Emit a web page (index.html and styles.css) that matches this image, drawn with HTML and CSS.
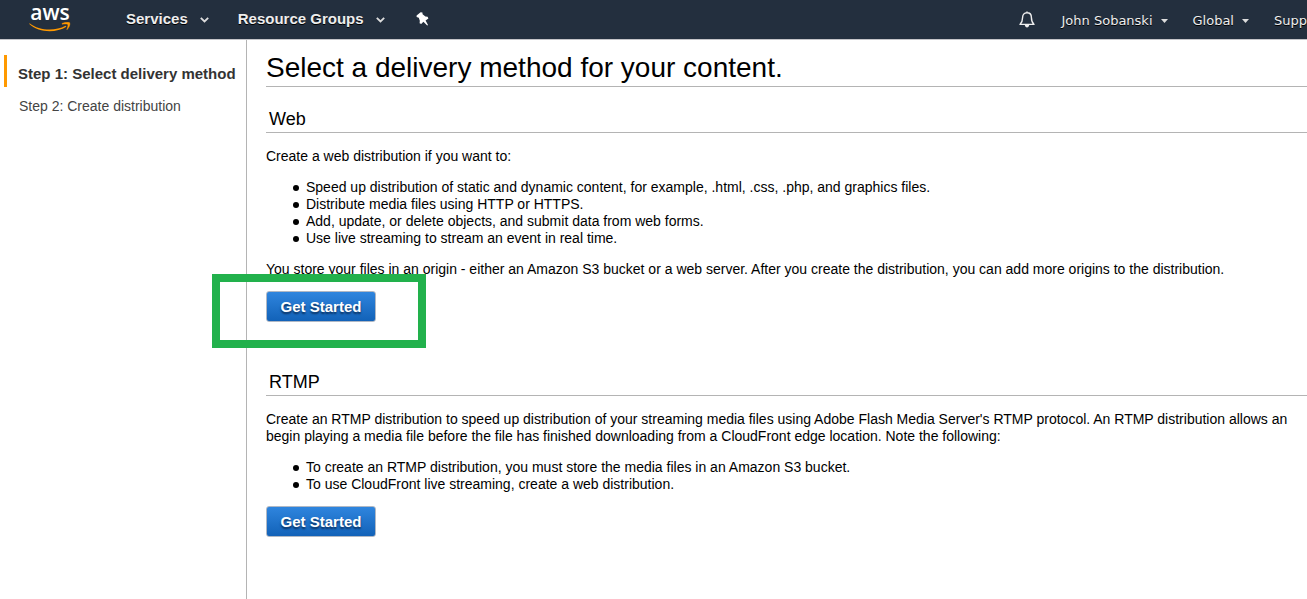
FILE: index.html
```html
<!DOCTYPE html>
<html lang="en">
<head>
<meta charset="utf-8">
<title>CloudFront - Select delivery method</title>
<link rel="stylesheet" href="styles.css">
</head>
<body>
<header class="topbar">
  <a class="logo" href="#" aria-label="AWS home">
    <span class="logo-text">aws</span>
    <svg class="logo-smile" width="42" height="12" viewBox="0 0 42 12" aria-hidden="true">
      <path d="M.6 1.2 C10 8.8 26 9.6 36.5 3.8 L37.4 4.8 C27 11.2 10 11 .3 2 Z" fill="#f90"/>
      <path d="M33 1.4 C36 .2 39 .1 40.8 .8 C41.4 3.2 39.5 6.5 37.8 7.8 C38.6 5.2 39.2 3.2 38.8 2.4 C38 1.8 35.5 2 33 2.2 Z" fill="#f90" stroke="#f90" stroke-width=".4"/>
    </svg>
  </a>
  <nav class="nav-main">
    <button class="nav-item" type="button">Services
      <svg class="chevron" width="9" height="6" viewBox="0 0 9 6" aria-hidden="true"><path d="M.8 .8 L4.5 4.4 L8.2 .8" fill="none" stroke="#ddd" stroke-width="1.8"/></svg>
    </button>
    <button class="nav-item" type="button">Resource Groups
      <svg class="chevron" width="9" height="6" viewBox="0 0 9 6" aria-hidden="true"><path d="M.8 .8 L4.5 4.4 L8.2 .8" fill="none" stroke="#ddd" stroke-width="1.8"/></svg>
    </button>
    <button class="nav-pin" type="button" aria-label="Pin shortcuts">
      <svg width="13" height="14" viewBox="0 0 13 14" aria-hidden="true"><path d="M4.6 .3 L6.4 .6 L6.6 2.2 L9.4 4.6 L11.6 4.8 L12.4 6.6 L9.6 8.6 L12 13 L11.2 13.6 L7.4 9.8 L5.2 12 L3.6 11.2 L3.8 8.8 L2.8 5.8 L.6 5 L.6 3.4 Z" fill="#fff"/></svg>
    </button>
  </nav>
  <nav class="nav-account">
    <button class="nav-bell" type="button" aria-label="Notifications">
      <svg width="16" height="17" viewBox="0 0 16 17" aria-hidden="true"><path d="M8 .6 V2 M8 1.8 C5 1.8 3.6 3.8 3.6 6.4 C3.6 10 2.7 11.7 1 13.4 H15 C13.3 11.7 12.4 10 12.4 6.4 C12.4 3.8 11 1.8 8 1.8 Z" fill="none" stroke="#eee" stroke-width="1.4" stroke-linejoin="round"/><path d="M5.8 14 H10.2 C10 17.2 6 17.2 5.8 14 Z" fill="#eee"/></svg>
    </button>
    <button class="account-item" type="button">John Sobanski
      <svg width="7" height="4" viewBox="0 0 7 4" aria-hidden="true"><path d="M0 0 H7 L3.5 4 Z" fill="#ddd"/></svg>
    </button>
    <button class="account-item" type="button">Global
      <svg width="7" height="4" viewBox="0 0 7 4" aria-hidden="true"><path d="M0 0 H7 L3.5 4 Z" fill="#ddd"/></svg>
    </button>
    <button class="account-item" type="button">Supp</button>
  </nav>
</header>
<div class="page">
  <aside class="steps">
    <a class="step step-current" href="#" aria-current="step">Step 1: Select delivery method</a>
    <a class="step" href="#">Step 2: Create distribution</a>
  </aside>
  <main class="content">
    <h1 class="title">Select a delivery method for your content.</h1>
    <section class="method">
      <h2 class="method-title">Web</h2>
      <p class="text">Create a web distribution if you want to:</p>
      <ul class="list">
        <li>Speed up distribution of static and dynamic content, for example, .html, .css, .php, and graphics files.</li>
        <li>Distribute media files using HTTP or HTTPS.</li>
        <li>Add, update, or delete objects, and submit data from web forms.</li>
        <li>Use live streaming to stream an event in real time.</li>
      </ul>
      <p class="text">You store your files in an origin - either an Amazon S3 bucket or a web server. After you create the distribution, you can add more origins to the distribution.</p>
      <div class="action"><button class="start" type="button">Get Started</button><span class="highlight"></span></div>
    </section>
    <section class="method">
      <h2 class="method-title">RTMP</h2>
      <p class="text">Create an RTMP distribution to speed up distribution of your streaming media files using Adobe Flash Media Server's RTMP protocol. An RTMP distribution allows an begin playing a media file before the file has finished downloading from a CloudFront edge location. Note the following:</p>
      <ul class="list">
        <li>To create an RTMP distribution, you must store the media files in an Amazon S3 bucket.</li>
        <li>To use CloudFront live streaming, create a web distribution.</li>
      </ul>
      <div class="action"><button class="start" type="button">Get Started</button></div>
    </section>
  </main>
</div>
</body>
</html>
```
FILE: styles.css
```css
* { box-sizing: border-box; }

body {
  margin: 0;
  min-height: 100vh;
  display: flex;
  flex-direction: column;
  background: #fff;
  color: #000;
  font: 14px/17px "Liberation Sans", Arial, sans-serif;
}

button {
  margin: 0;
  padding: 0;
  border: 0;
  background: none;
  cursor: pointer;
}

a { text-decoration: none; }
svg { display: block; flex: none; }

.topbar {
  display: flex;
  align-items: center;
  height: 40px;
  background: #232f3e;
  border-bottom: 1px solid #c4c4c8;
}

.logo {
  display: flex;
  flex-direction: column;
  align-items: center;
  flex: none;
  width: 42px;
  margin-left: 29px;
}

.logo-text {
  margin-top: -3px;
  color: #fff;
  font: 600 21px/20px "Open Sans", sans-serif;
}

.nav-main {
  display: flex;
  align-items: center;
  flex: none;
  gap: 29px;
  margin-left: 55px;
  padding-bottom: 2px;
}

.nav-item {
  display: flex;
  align-items: center;
  gap: 12px;
  color: #eee;
  font: bold 15px/18px "Liberation Sans", Arial, sans-serif;
  text-shadow: 0 1px 0 #000;
  white-space: nowrap;
}

.chevron { margin-top: 2px; }

.nav-pin { padding-left: 2px; }

.nav-account {
  display: flex;
  align-items: center;
  flex: none;
  gap: 25px;
  margin-left: auto;
}

.nav-bell { padding-right: 2px; }

.account-item {
  display: flex;
  align-items: center;
  gap: 8px;
  padding-top: 2px;
  color: #eee;
  font: 13px/18px "DejaVu Sans", Verdana, sans-serif;
  text-shadow: 0 1px 0 #000;
  white-space: nowrap;
}

.page {
  display: flex;
  flex: 1;
}

.steps {
  flex: 0 0 247px;
  padding: 15px 0 0 4px;
  border-right: 1px solid #b4b4b4;
}

.step {
  display: block;
  height: 32px;
  padding: 3px 0 0 12px;
  border-left: 3px solid transparent;
  color: #444;
  line-height: 32px;
  white-space: nowrap;
}

.step-current {
  padding-left: 11px;
  border-left-color: #ff9900;
  color: #333;
  font-size: 15px;
  font-weight: bold;
}

.content {
  flex: 1;
  min-width: 0;
  padding: 10px 0 24px 19px;
}

.title {
  margin: 0;
  border-bottom: 1px solid #b4b4b4;
  font-size: 28px;
  line-height: 36px;
  font-weight: normal;
}

.method { padding-top: 20px; }
.method + .method { padding-top: 48px; }

.method-title {
  margin: 0;
  padding: 0 3px 1px;
  border-bottom: 1px solid #b4b4b4;
  font-size: 18px;
  line-height: 24px;
  font-weight: normal;
}

.text { margin: 14px 0; }
.method-title + .text { margin-top: 15px; }

.list {
  margin: 14px 0;
  padding-left: 40px;
  list-style: none;
}

.list li::before {
  content: "";
  display: inline-block;
  width: 6px;
  height: 6px;
  margin: 0 7px 0 -13px;
  border-radius: 50%;
  background: #000;
  vertical-align: 1px;
}

.action {
  position: relative;
  width: max-content;
  margin-top: -1px;
}

.start {
  display: block;
  width: 110px;
  height: 31px;
  border: 1px solid #b0b8c4;
  border-radius: 3px;
  background: linear-gradient(#2f85de, #1262b8);
  color: #fff;
  font: bold 15px/18px "Liberation Sans", Arial, sans-serif;
  text-shadow: 0 2px 2px #0a2f5c;
}

.highlight {
  position: absolute;
  top: -17px;
  left: -54px;
  width: 214px;
  height: 74px;
  border: 8px solid #22b14c;
  pointer-events: none;
}
```
